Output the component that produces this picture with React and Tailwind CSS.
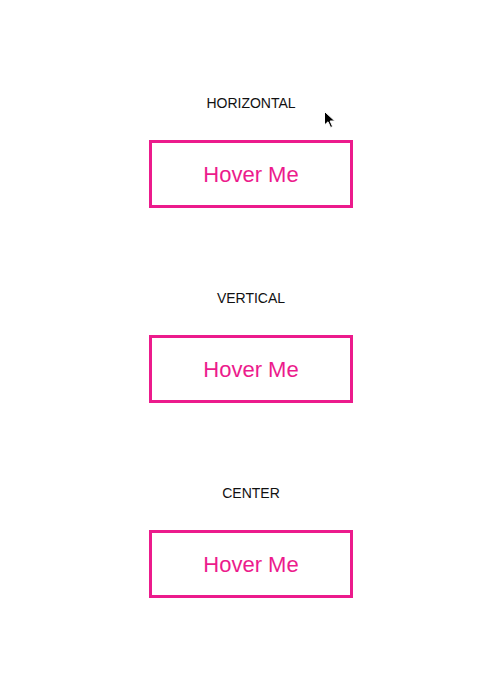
import React from "react";

const Section = ({ label }) => (
  <div className="flex flex-col items-center">
    <div className="text-[14px] leading-4 text-[#111]">{label}</div>
    <button className="mt-[29px] w-[204px] h-[68px] border-[3px] border-[#ec1b8c] bg-white text-[22px] text-[#ec1b8c]">
      Hover Me
    </button>
  </div>
);

const App = () => {
  return (
    <div
      className="relative min-h-[694px] w-full bg-white pt-[95px] pl-1"
      style={{ fontFamily: '"Liberation Sans", Arial, sans-serif' }}
    >
      <div className="flex flex-col gap-[82px]">
        <Section label="HORIZONTAL" />
        <Section label="VERTICAL" />
        <Section label="CENTER" />
      </div>

      {/* mouse cursor */}
      <svg
        className="absolute left-[323px] top-[110px]"
        width="14"
        height="20"
        viewBox="0 0 14 20"
      >
        <path
          d="M1.5 1.5 L1.5 15 L5 11.8 L7.6 17.5 L9.6 16.6 L7.1 11 L11.8 11 Z"
          fill="#000"
          stroke="#fff"
          strokeWidth="1"
        />
      </svg>
    </div>
  );
};

export default App;
